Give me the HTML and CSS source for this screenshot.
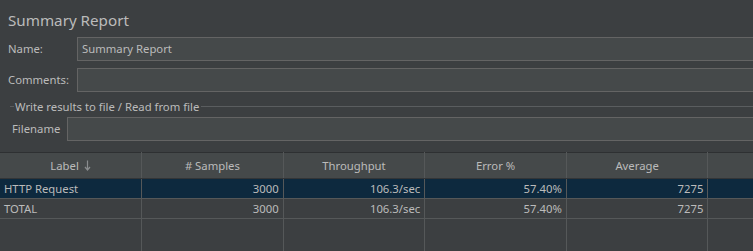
FILE: index.html
```html
<!DOCTYPE html>
<html lang="en">
<head>
<meta charset="utf-8">
<title>Summary Report</title>
<link rel="stylesheet" href="styles.css">
</head>
<body>
<div class="panel">
  <h1 class="title">Summary Report</h1>
  <div class="row">
    <label class="lbl">Name:</label>
    <div class="field">Summary Report</div>
  </div>
  <div class="row comments">
    <label class="lbl">Comments:</label>
    <div class="field"></div>
  </div>
  <div class="group">
    <div class="legend"><span class="legend-text">Write results to file / Read from file</span></div>
    <div class="row file">
      <label class="lbl">Filename</label>
      <div class="field"></div>
    </div>
  </div>
</div>
<table class="results">
  <thead>
    <tr><th>Label <svg class="sort" width="7" height="11" viewBox="0 0 7 11"><path d="M3.5 0.5V9.5M1 7l2.5 3L6 7" fill="none" stroke="#8a8d8f" stroke-width="1.2"/></svg></th><th># Samples</th><th>Throughput</th><th>Error %</th><th>Average</th><th></th></tr>
  </thead>
  <tbody>
    <tr class="selected"><td class="txt">HTTP Request</td><td>3000</td><td>106.3/sec</td><td>57.40%</td><td>7275</td><td></td></tr>
    <tr><td class="txt">TOTAL</td><td>3000</td><td>106.3/sec</td><td>57.40%</td><td>7275</td><td></td></tr>
    <tr class="empty"><td></td><td></td><td></td><td></td><td></td><td></td></tr>
  </tbody>
</table>
</body>
</html>
```
FILE: styles.css
```css
html, body { margin: 0; padding: 0; }
body { background: #3c3f41; color: #bbbbbb; font: 11.3px "Noto Sans", "Open Sans", sans-serif; overflow: hidden; width: 753px; height: 251px; }

.panel { padding: 0 0 0 8px; margin-right: -20px; }
.title { font-size: 15.2px; font-weight: normal; margin: 0; height: 37px; line-height: 40px; }

.row { display: grid; grid-template-columns: 69px 1fr; align-items: center; height: 24px; }
.comments { margin-top: 7px; }
.lbl { line-height: 24px; }
.field { height: 22px; line-height: 22px; background: #45494a; border: 1px solid #646464; padding-left: 4px; color: #bbbbbb; }

.group { margin-top: 4px; }
.legend { display: flex; align-items: center; height: 20px; margin-left: 2px; }
.legend::before { content: ""; width: 4px; border-top: 1px solid #5a5d5f; margin-right: 1px; }
.legend::after { content: ""; flex: 1; border-top: 1px solid #5a5d5f; margin-left: 2px; }
.row.file { grid-template-columns: 55px 1fr; margin-top: 1px; padding-left: 4px; }

.results { margin-top: 11px; border-collapse: collapse; table-layout: fixed; width: 850px; border-top: 1px solid #2e3032; }
.results th, .results td { padding: 0 4px; border-right: 1px solid #555859; overflow: hidden; white-space: nowrap; }
.results th { height: 25px; background: #45494a; font-weight: normal; text-align: center; color: #bbbbbb; border-bottom: 1px solid #333537; }
.results td { height: 19px; text-align: right; border-bottom: 1px solid #555859; }
.results td.txt { text-align: left; }
.results tr.selected td { background: #0d293e; }
.results tr.empty td { height: 34px; border-bottom: none; }
.sort { vertical-align: -1px; margin-left: 2px; }
```
